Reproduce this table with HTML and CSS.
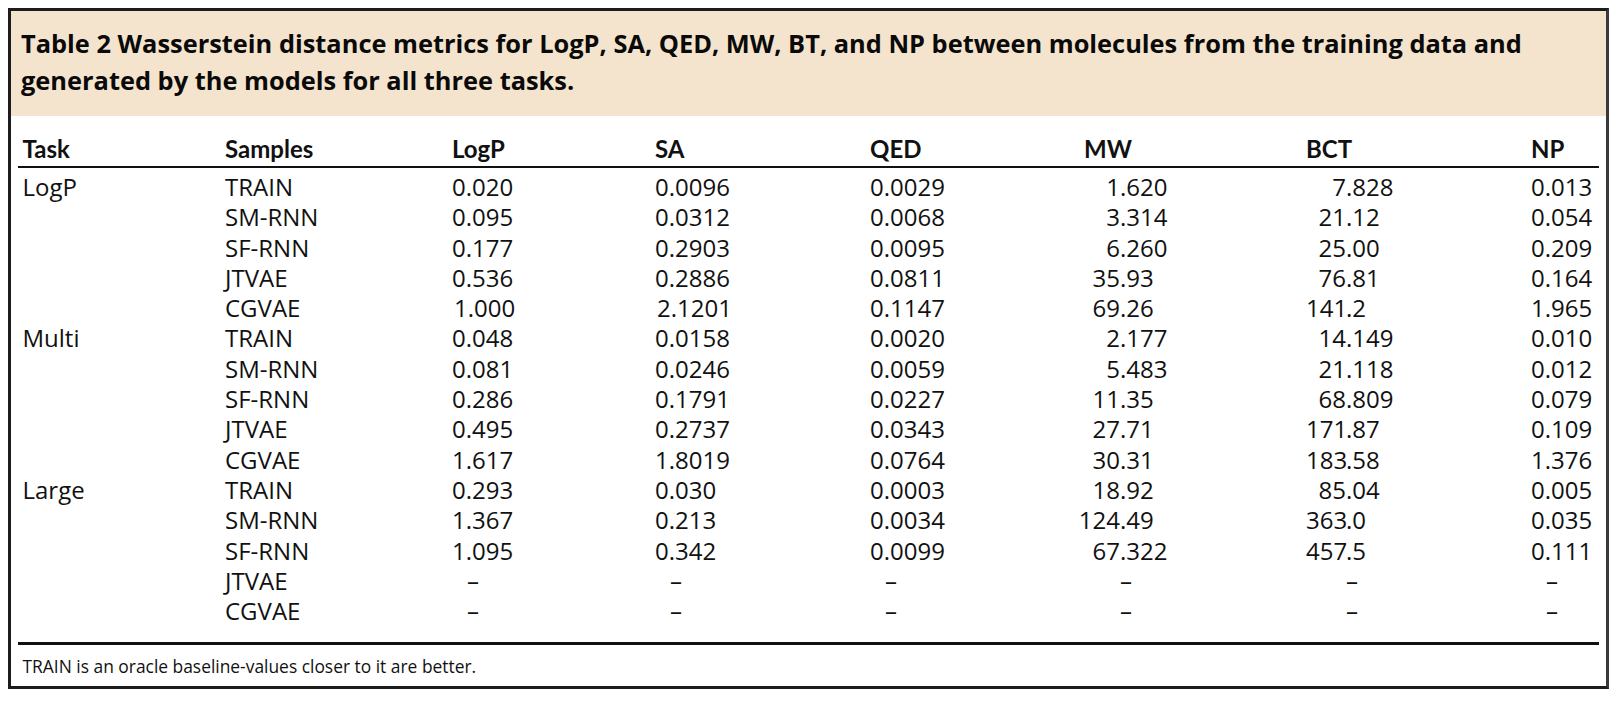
FILE: index.html
```html
<!DOCTYPE html>
<html lang="en">
<head>
<meta charset="utf-8">
<title>Table 2</title>
<link rel="stylesheet" href="styles.css">
</head>
<body>
<div class="box">
  <div class="caption">Table 2 Wasserstein distance metrics for LogP, SA, QED, MW, BT, and NP between molecules from the training data and<br>generated by the models for all three tasks.</div>
  <div class="tbl">
    <div class="row head">
      <div>Task</div><div>Samples</div><div>LogP</div><div>SA</div><div>QED</div><div>MW</div><div>BCT</div><div>NP</div>
    </div>
    <div class="body">
      <div class="row"><div>LogP</div><div>TRAIN</div><div>0.020</div><div>0.0096</div><div>0.0029</div><div><span class="ip w2">1</span>.620</div><div><span class="ip w3">7</span>.828</div><div>0.013</div></div>
      <div class="row"><div></div><div>SM-RNN</div><div>0.095</div><div>0.0312</div><div>0.0068</div><div><span class="ip w2">3</span>.314</div><div><span class="ip w3">21</span>.12</div><div>0.054</div></div>
      <div class="row"><div></div><div>SF-RNN</div><div>0.177</div><div>0.2903</div><div>0.0095</div><div><span class="ip w2">6</span>.260</div><div><span class="ip w3">25</span>.00</div><div>0.209</div></div>
      <div class="row"><div></div><div>JTVAE</div><div>0.536</div><div>0.2886</div><div>0.0811</div><div><span class="ip w2">35</span>.93</div><div><span class="ip w3">76</span>.81</div><div>0.164</div></div>
      <div class="row"><div></div><div>CGVAE</div><div class="nudge">1.000</div><div class="nudge">2.1201</div><div>0.1147</div><div><span class="ip w2">69</span>.26</div><div><span class="ip w3">141</span>.2</div><div>1.965</div></div>
      <div class="row"><div>Multi</div><div>TRAIN</div><div>0.048</div><div>0.0158</div><div>0.0020</div><div><span class="ip w2">2</span>.177</div><div><span class="ip w3">14</span>.149</div><div>0.010</div></div>
      <div class="row"><div></div><div>SM-RNN</div><div>0.081</div><div>0.0246</div><div>0.0059</div><div><span class="ip w2">5</span>.483</div><div><span class="ip w3">21</span>.118</div><div>0.012</div></div>
      <div class="row"><div></div><div>SF-RNN</div><div>0.286</div><div>0.1791</div><div>0.0227</div><div><span class="ip w2">11</span>.35</div><div><span class="ip w3">68</span>.809</div><div>0.079</div></div>
      <div class="row"><div></div><div>JTVAE</div><div>0.495</div><div>0.2737</div><div>0.0343</div><div><span class="ip w2">27</span>.71</div><div><span class="ip w3">171</span>.87</div><div>0.109</div></div>
      <div class="row"><div></div><div>CGVAE</div><div>1.617</div><div>1.8019</div><div>0.0764</div><div><span class="ip w2">30</span>.31</div><div><span class="ip w3">183</span>.58</div><div>1.376</div></div>
      <div class="row"><div>Large</div><div>TRAIN</div><div>0.293</div><div>0.030</div><div>0.0003</div><div><span class="ip w2">18</span>.92</div><div><span class="ip w3">85</span>.04</div><div>0.005</div></div>
      <div class="row"><div></div><div>SM-RNN</div><div>1.367</div><div>0.213</div><div>0.0034</div><div><span class="ip w2">124</span>.49</div><div><span class="ip w3">363</span>.0</div><div>0.035</div></div>
      <div class="row"><div></div><div>SF-RNN</div><div>1.095</div><div>0.342</div><div>0.0099</div><div><span class="ip w2">67</span>.322</div><div><span class="ip w3">457</span>.5</div><div>0.111</div></div>
      <div class="row"><div></div><div>JTVAE</div><div class="dash">&ndash;</div><div class="dash">&ndash;</div><div class="dash">&ndash;</div><div><span class="ip w2"></span>&ndash;</div><div><span class="ip w3"></span>&ndash;</div><div class="dash">&ndash;</div></div>
      <div class="row"><div></div><div>CGVAE</div><div class="dash">&ndash;</div><div class="dash">&ndash;</div><div class="dash">&ndash;</div><div><span class="ip w2"></span>&ndash;</div><div><span class="ip w3"></span>&ndash;</div><div class="dash">&ndash;</div></div>
    </div>
    <div class="foot">TRAIN is an oracle baseline-values closer to it are better.</div>
  </div>
</div>
</body>
</html>
```

FILE: styles.css
```css
html, body {
  margin: 0;
  padding: 0;
  background: #ffffff;
}
body {
  padding: 8px;
  font-family: "Open Sans", "Noto Sans", sans-serif;
  color: #111;
}
.box {
  width: 1595px;
  border: 3px solid #1c1c1c;
  border-right-color: #3a3a3a;
  box-sizing: content-box;
}
.caption {
  background: #f5e4cd;
  font-family: "Open Sans", "Noto Sans", sans-serif;
  font-weight: 700;
  font-size: 25.4px;
  line-height: 37px;
  padding: 14px 10px 17px 10px;
  white-space: nowrap;
  color: #0a0a0a;
}
.tbl {
  margin: 0 7px;
  padding-top: 18px;
}
.row {
  display: grid;
  grid-template-columns: 202.5px 227px 203px 215px 214px 222px 225px 1fr;
  padding-left: 4.5px;
  font-size: 24px;
  line-height: 30.3px;
  white-space: nowrap;
}
.head {
  font-family: "Lato", "Open Sans", sans-serif;
  font-weight: 700;
  font-size: 24px;
  line-height: 30px;
  padding-bottom: 2px;
  border-bottom: 2px solid #111;
}
.body {
  padding-top: 4px;
  padding-bottom: 16px;
  border-bottom: 3px solid #111;
}
.ip {
  display: inline-block;
  text-align: right;
}
.w2 { width: 56px; margin-left: -20px; }
.w3 { width: 40px; }
.dash { padding-left: 15px; }
.nudge { padding-left: 2px; }
.foot {
  font-size: 17.4px;
  line-height: 24px;
  padding: 9px 0 8px 4.5px;
}
```
